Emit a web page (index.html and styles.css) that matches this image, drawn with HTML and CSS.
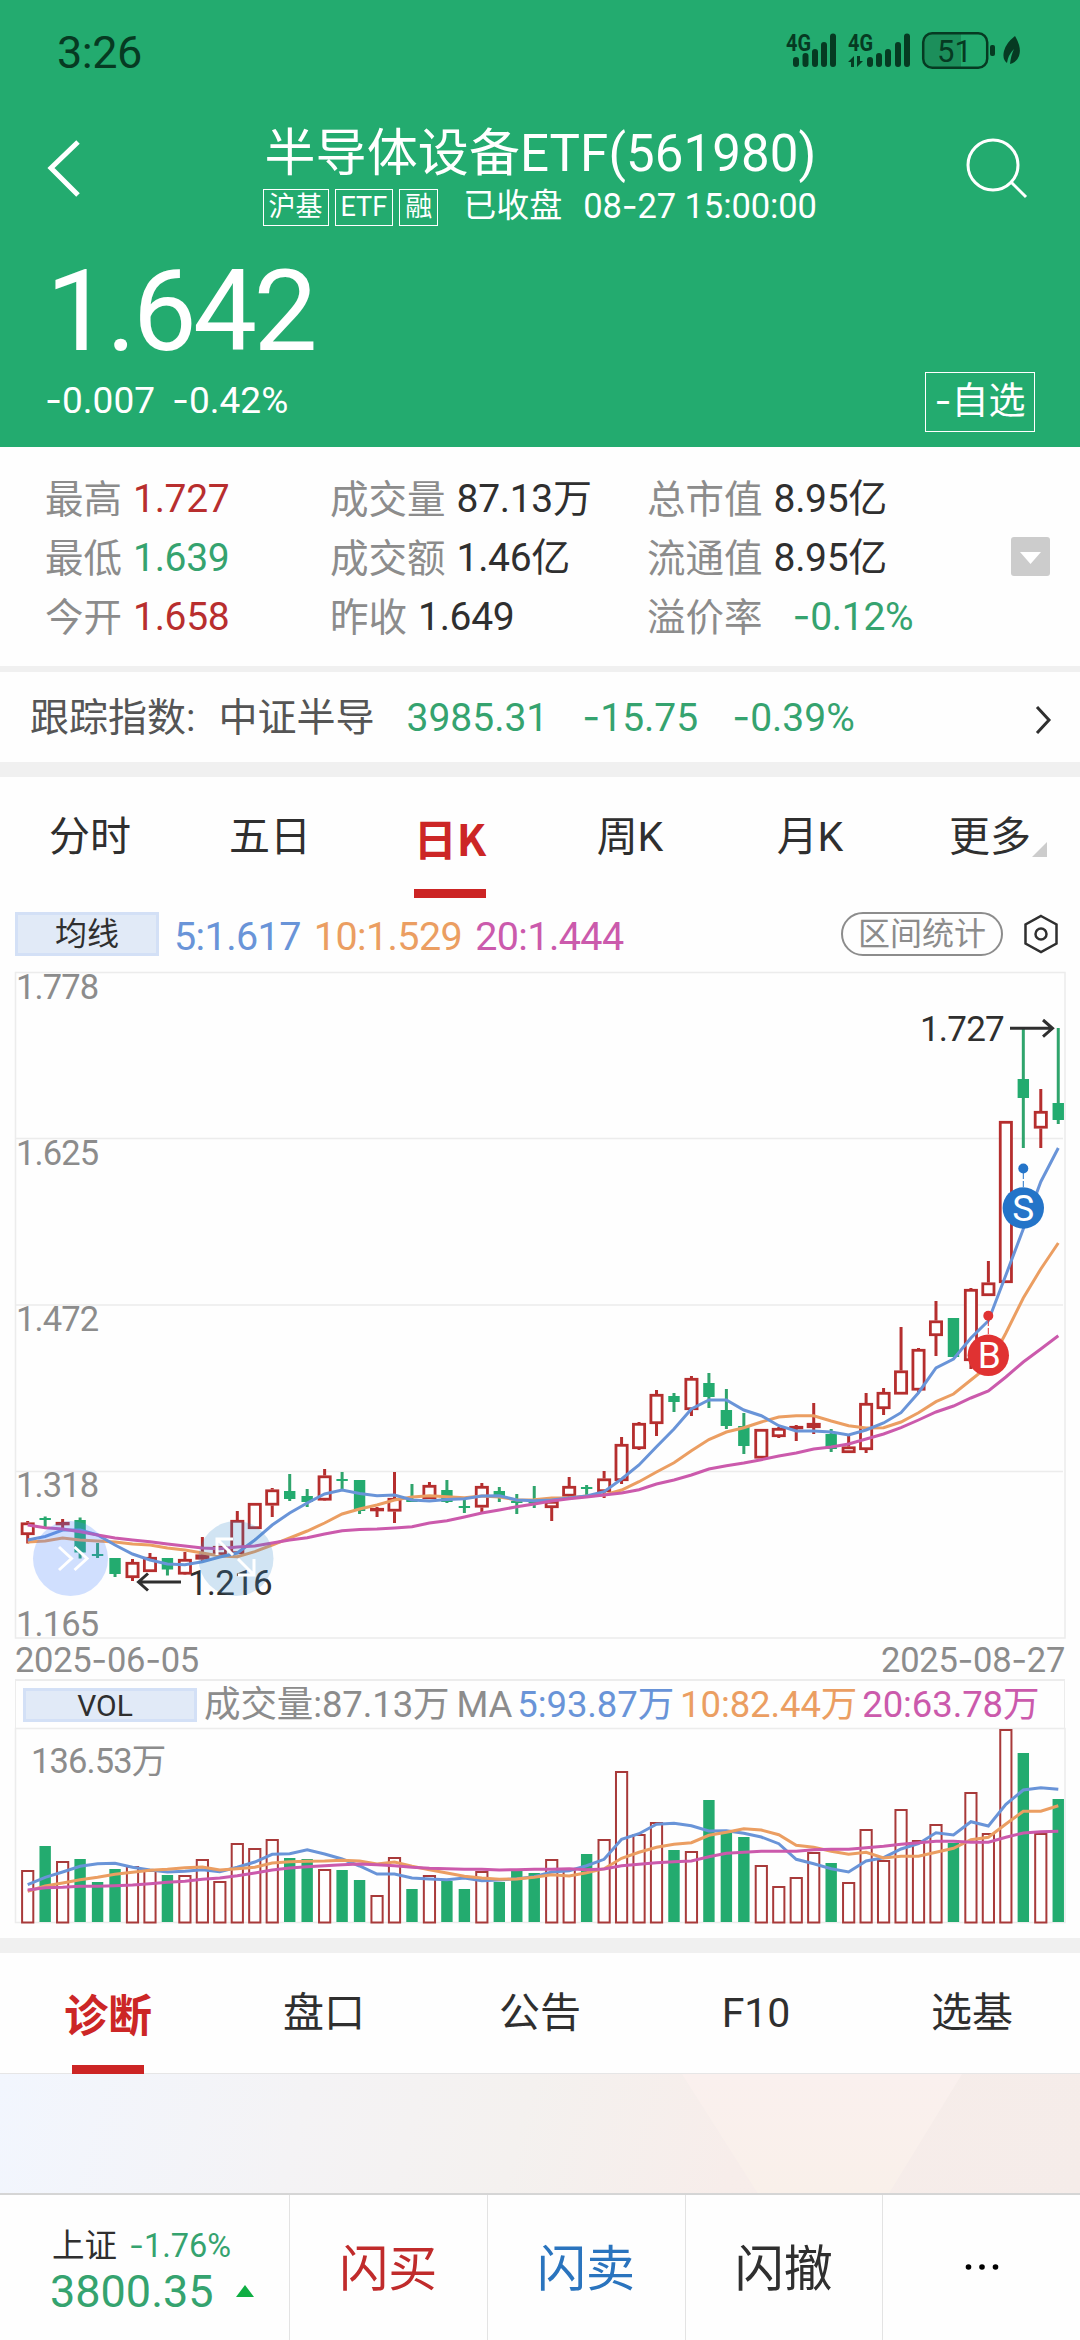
FILE: index.html
```html
<!DOCTYPE html>
<html lang="zh-CN">
<head>
    <meta charset="UTF-8">
    <meta name="viewport" content="width=device-width, initial-scale=1.0">
    <title>半导体设备ETF(561980)</title>
    <link rel="stylesheet" href="styles.css">
</head>
<body>
    <header class="header">
        <div class="status-bar">
            <span class="clock">3:26</span>
            <svg class="status-icons" width="240" height="44" viewBox="784 30 240 44">
                <g class="net">
                    <text x="786" y="51" textLength="25" lengthAdjust="spacingAndGlyphs">4G</text>
                    <text x="848" y="51" textLength="25" lengthAdjust="spacingAndGlyphs">4G</text>
                </g>
                <g class="bars">
                    <path d="M796 60v4M805.500 56v8M815 52v12M824 45v19M833 36.500v27.500"/>
                    <path d="M870 60v4M879 56v8M888 52v12M898 45v19M907 36.500v27.500"/>
                </g>
                <path class="ink" d="M848 62l6-6v11h-3v-5zM863 61l-6 6v-11h3v5z"/>
                <path class="battery-fill" d="M932 34h29v34h-29q-8 0-8-8v-18q0-8 8-8z"/>
                <rect class="battery" x="923.200" y="33.200" width="64" height="34.600" rx="9"/>
                <rect class="ink" x="990" y="45" width="5" height="11" rx="2"/>
                <text class="battery-text" x="937" y="62">51</text>
                <path class="ink" d="M1015 36q7 12 4 20q-3 7-9 8q1-9 4-15q-6 6-7 14q-5-4-3-12q2-8 11-15z"/>
            </svg>
        </div>
        <div class="nav">
            <svg class="back" width="40" height="64" viewBox="0 0 40 64"><path d="M32 6L5 32L32 59"/></svg>
            <div class="nav-title">
                <h1>半导体设备ETF(561980)</h1>
                <div class="nav-sub">
                    <span class="tag">沪基</span>
                    <span class="tag">ETF</span>
                    <span class="tag">融</span>
                    <span class="state">已收盘</span>
                    <span class="date">08<i>-</i>27 15:00:00</span>
                </div>
            </div>
            <svg class="search" width="64" height="64" viewBox="0 0 64 64"><circle cx="28" cy="29" r="25"/><path d="M46 46L61 61"/></svg>
        </div>
        <div class="price">1.642</div>
        <div class="price-row">
            <span class="diff"><i>-</i>0.007</span>
            <span class="diff"><i>-</i>0.42%</span>
            <button class="fav"><i>-</i>自选</button>
        </div>
    </header>

    <section class="stats">
        <dl class="stats-grid">
            <div><dt>最高</dt><dd class="up">1.727</dd></div>
            <div><dt>成交量</dt><dd>87.13万</dd></div>
            <div><dt>总市值</dt><dd>8.95亿</dd></div>
            <div><dt>最低</dt><dd class="down">1.639</dd></div>
            <div><dt>成交额</dt><dd>1.46亿</dd></div>
            <div><dt>流通值</dt><dd>8.95亿</dd></div>
            <div><dt>今开</dt><dd class="up">1.658</dd></div>
            <div><dt>昨收</dt><dd>1.649</dd></div>
            <div><dt>溢价率</dt><dd class="down premium"><i>-</i>0.12%</dd></div>
        </dl>
        <svg class="expand" width="39" height="39" viewBox="0 0 39 39"><rect width="39" height="39" rx="3"/><path d="M9 15h21l-10.500 12z"/></svg>
    </section>

    <section class="index-row">
        <span class="index-label">跟踪指数:</span>
        <span class="index-name">中证半导</span>
        <span class="index-value">3985.31</span>
        <span class="index-diff"><i>-</i>15.75</span>
        <span class="index-pct"><i>-</i>0.39%</span>
        <svg class="chevron" width="18" height="30" viewBox="0 0 18 30"><path d="M3 2L15 15L3 28"/></svg>
    </section>

    <nav class="tabs">
        <span>分时</span>
        <span>五日</span>
        <span class="active">日K</span>
        <span>周K</span>
        <span>月K</span>
        <span class="more">更多</span>
    </nav>

    <section class="ma-row">
        <span class="chip">均线</span>
        <span class="ma ma5">5:1.617</span>
        <span class="ma ma10">10:1.529</span>
        <span class="ma ma20">20:1.444</span>
        <span class="pill">区间统计</span>
        <svg class="gear" width="38" height="42" viewBox="0 0 38 42"><path d="M19 3L34.500 11.500V30.500L19 39L3.500 30.500V11.500Z"/><circle cx="19" cy="21" r="5.500"/></svg>
    </section>

    <svg class="chart" id="kline" width="1080" height="669" viewBox="0 971 1080 669">
        <path class="grid" d="M15.500 972.500H1065V1638H15.500ZM15 1138.500H1063M15 1305H1063M15 1471.500H1063"/>
        <g class="axis">
            <text x="16" y="999">1.778</text>
            <text x="16" y="1165">1.625</text>
            <text x="16" y="1331">1.472</text>
            <text x="16" y="1497">1.318</text>
            <text x="16" y="1636">1.165</text>
        </g>
    </svg>
    <div class="dates"><span>2025<i>-</i>06<i>-</i>05</span><span>2025<i>-</i>08<i>-</i>27</span></div>

    <section class="vol-row">
        <span class="chip vol-chip">VOL</span>
        <span class="vol-total">成交量:87.13万</span>
        <span class="vol-ma">MA</span>
        <span class="vol5 ma5">5:93.87万</span>
        <span class="vol10 ma10">10:82.44万</span>
        <span class="vol20 ma20">20:63.78万</span>
    </section>
    <svg class="chart" id="volume" width="1080" height="210" viewBox="0 1728 1080 210">
        <path class="grid" d="M15.500 1728.500H1065V1922.500H15.500Z"/>
        <text class="axis" x="31" y="1773">136.53万</text>
    </svg>

    <nav class="tabs tabs-bottom">
        <span class="active">诊断</span>
        <span>盘口</span>
        <span>公告</span>
        <span>F10</span>
        <span>选基</span>
    </nav>
    <div class="banner"></div>

    <footer class="footer">
        <div class="market">
            <div class="market-top"><span>上证</span><span class="down"><i>-</i>1.76%</span></div>
            <div class="market-index">3800.35<svg width="18" height="12" viewBox="0 0 18 12"><path d="M9 0L18 12H0Z"/></svg></div>
        </div>
        <div class="action buy">闪买</div>
        <div class="action sell">闪卖</div>
        <div class="action">闪撤</div>
        <div class="action"><svg width="40" height="10" viewBox="0 0 40 10"><circle cx="6.500" cy="5" r="2.800"/><circle cx="20" cy="5" r="2.800"/><circle cx="33.500" cy="5" r="2.800"/></svg></div>
    </footer>

    <script>
        const STEP = 17.467;
        const FIRST = 27.7;
        const kline = document.getElementById('kline');
        const volume = document.getElementById('volume');

        // [up, high, body top, body bottom, low, volume top]
        const candles = [
            [1, 1521, 1522.5, 1535, 1543.5, 1870], [0, 1516.5, 1518, 1520, 1529, 1846], [1, 1519, 1522, 1524, 1528, 1861],
            [0, 1517.5, 1520, 1552.5, 1558.5, 1859], [0, 1543, 1554, 1556, 1558, 1882], [0, 1558, 1558, 1574, 1577, 1869],
            [1, 1559, 1562, 1578, 1581, 1866], [1, 1553, 1557, 1572, 1572, 1870], [0, 1558, 1558, 1569.5, 1575.5, 1875],
            [1, 1552, 1559, 1574.5, 1575, 1875], [1, 1537, 1554.5, 1559.5, 1562.5, 1859], [1, 1546, 1546, 1555, 1555, 1881],
            [1, 1511, 1520, 1554, 1554, 1843], [1, 1503, 1503, 1529, 1529, 1848], [1, 1488, 1489.5, 1505.5, 1517, 1839],
            [0, 1474, 1491, 1499, 1501, 1858], [0, 1489, 1496, 1502, 1507, 1859], [1, 1469, 1475.5, 1500.5, 1501, 1869],
            [0, 1472, 1479, 1481, 1489, 1870], [0, 1480, 1480, 1511, 1514, 1880], [1, 1507, 1508, 1510, 1517, 1895],
            [1, 1472, 1498, 1511.5, 1523, 1857], [0, 1484, 1500, 1502, 1502, 1889], [1, 1482, 1485, 1499, 1499, 1875],
            [0, 1480, 1490, 1502, 1503, 1881], [0, 1499, 1506, 1508, 1513, 1889], [1, 1483, 1486, 1507.5, 1512, 1871],
            [0, 1487, 1491, 1497, 1502, 1882], [0, 1494, 1501, 1503, 1514, 1870], [0, 1486, 1501, 1503.5, 1508, 1873],
            [1, 1501, 1501, 1508, 1521, 1859], [1, 1477, 1486, 1496.5, 1497, 1869], [0, 1485, 1487, 1489, 1495, 1854],
            [1, 1471, 1478.5, 1492, 1498, 1839], [1, 1437, 1444, 1481, 1484, 1771], [1, 1422, 1423, 1449, 1450, 1834],
            [1, 1390, 1394, 1424, 1436, 1822], [0, 1393, 1396, 1402, 1412, 1850], [1, 1376, 1378, 1410, 1416, 1851],
            [0, 1373, 1383, 1397, 1408, 1800], [0, 1389, 1410, 1426, 1429, 1832], [0, 1413, 1426, 1446, 1454, 1837],
            [1, 1429, 1429, 1458.5, 1458, 1865], [1, 1427, 1428, 1437, 1438, 1886], [1, 1425, 1426, 1428, 1441, 1877],
            [1, 1403, 1423, 1428, 1434, 1852], [0, 1429, 1434, 1449, 1452, 1863], [1, 1435, 1446.5, 1453, 1453, 1882],
            [1, 1393, 1403, 1450, 1453, 1829], [1, 1388, 1392, 1409, 1415, 1860], [1, 1327, 1370.5, 1394.5, 1394, 1809],
            [1, 1348, 1349, 1390.5, 1392, 1840], [1, 1301, 1320.5, 1336, 1356, 1824], [0, 1318, 1318, 1357, 1357, 1843],
            [1, 1288, 1289, 1361, 1369, 1792], [1, 1261, 1282.5, 1296, 1296, 1833], [1, 1121, 1121, 1283, 1283, 1729],
            [0, 1029, 1079, 1098, 1148, 1753], [1, 1089, 1111, 1128.5, 1148, 1833], [0, 1028, 1103, 1120, 1124, 1799]
        ];

        const priceLines = {
            line10: [1542, 1541, 1538, 1540, 1541, 1542, 1544, 1545, 1548, 1550, 1553, 1556, 1556.7, 1551.7, 1545, 1538, 1531, 1523, 1514, 1509, 1505, 1500, 1497, 1495.7, 1496.7, 1497.7, 1496, 1497, 1500, 1499.7, 1498, 1497.7, 1496, 1495, 1490, 1481.7, 1472, 1462.7, 1450.7, 1439.5, 1432, 1427.7, 1422, 1417, 1415.7, 1415.7, 1421, 1425.7, 1428, 1427.7, 1422, 1412.7, 1401.7, 1394, 1380, 1366, 1333, 1298, 1269, 1243],
            line5: [1540, 1536.5, 1530, 1530, 1535, 1545, 1554, 1560, 1564, 1564.7, 1561.7, 1557, 1553, 1540, 1525, 1513, 1503, 1494, 1490, 1493.5, 1495.7, 1495, 1500, 1501, 1499.5, 1498.7, 1496, 1495.7, 1500, 1500.7, 1500, 1498, 1496, 1491.7, 1479, 1465, 1446.7, 1429, 1409, 1400, 1400, 1410, 1415.7, 1425.7, 1431, 1431, 1432, 1435, 1430, 1423, 1412.7, 1392.7, 1368, 1359, 1338, 1320.7, 1275, 1229, 1181.7, 1148],
            line20: [1525, 1527.7, 1529, 1531.7, 1535, 1538, 1540, 1541.7, 1544, 1546, 1548, 1548.7, 1547, 1546, 1543, 1540, 1537.7, 1534, 1530.7, 1529.6, 1529, 1528, 1526.7, 1523, 1520.7, 1517, 1513, 1510, 1506.7, 1504, 1501, 1498.7, 1497, 1495, 1493, 1489.7, 1484, 1480, 1475, 1469, 1465.7, 1463, 1459.7, 1456, 1453, 1449, 1447, 1444, 1439, 1434, 1427.7, 1420, 1412, 1406, 1398, 1391, 1377, 1362, 1349, 1335.7]
        };

        const volumeLines = {
            line5: [1884.7, 1877.3, 1872, 1866.3, 1863.7, 1863.3, 1867.3, 1870, 1872, 1871.3, 1869.7, 1871.7, 1867.3, 1862, 1854.3, 1853.7, 1849.7, 1854, 1859, 1866, 1874, 1874, 1878, 1879, 1879.7, 1878, 1880.7, 1880, 1878.7, 1876.7, 1872, 1870.7, 1865.7, 1859.3, 1839.3, 1833.7, 1824.3, 1823.3, 1825.7, 1831, 1830.7, 1833.3, 1837, 1843.7, 1859.3, 1863.7, 1868.7, 1872, 1861, 1857.7, 1849, 1843.7, 1832.7, 1835, 1821.7, 1826, 1804.3, 1790, 1787.7, 1789.3],
            line10: [1891.3, 1886, 1883, 1879.7, 1877.3, 1874.3, 1872.3, 1870.3, 1869.3, 1867.7, 1867, 1870, 1868.7, 1867.3, 1863, 1861.7, 1861.3, 1861, 1860.3, 1861, 1864, 1862, 1866.3, 1869.7, 1873, 1876.3, 1878, 1879.3, 1879, 1877.3, 1874.7, 1876, 1872.7, 1868.7, 1858.3, 1852.3, 1847.3, 1844.3, 1842.7, 1835.3, 1832.3, 1828.7, 1830, 1834.7, 1845.3, 1847.3, 1851.3, 1854.3, 1852.3, 1858, 1856.3, 1856.3, 1852.3, 1848.3, 1839.7, 1837.3, 1824, 1811.3, 1811.3, 1805.7],
            line20: [1890, 1887.7, 1887.3, 1886.3, 1886.3, 1885.7, 1885, 1883.7, 1882.3, 1881.3, 1879.3, 1878, 1875.7, 1873, 1870, 1868, 1866.7, 1865.7, 1864.7, 1864, 1864.7, 1865.7, 1867.3, 1868.3, 1868.7, 1869.3, 1869.3, 1870, 1869.7, 1869.3, 1869.3, 1868.7, 1869.7, 1869, 1865.7, 1864.3, 1862.7, 1861.7, 1861, 1856.7, 1853.3, 1852.3, 1851.3, 1851.3, 1851.3, 1849.7, 1849.3, 1849.3, 1847.7, 1846.3, 1844.3, 1842.7, 1841.3, 1841.3, 1842.3, 1842.3, 1837.3, 1833, 1831.7, 1831.3]
        };

        function xAt(i) {
            return FIRST + i * STEP;
        }

        function add(parent, html) {
            parent.insertAdjacentHTML('beforeend', html);
        }

        function drawLines(parent, lines) {
            for (const name in lines) {
                const points = lines[name].map((y, i) => `${xAt(i).toFixed(1)},${y}`).join(' ');
                add(parent, `<polyline class="${name}" points="${points}"/>`);
            }
        }

        candles.forEach(([up, high, top, bottom, low, vol], i) => {
            const x = xAt(i);
            if (up) {
                // hollow body with the wick above and below it
                add(kline, `<path class="wick-up" d="M${x} ${high}V${top}M${x} ${bottom}V${Math.max(low, bottom)}"/>`);
                const h = Math.max(bottom - top - 2.6, 0.6);
                add(kline, `<rect class="body-up" x="${x - 5.6}" y="${top + 1.3}" width="11.2" height="${h}"/>`);
                add(volume, `<rect class="vol-up" x="${x - 5.6}" y="${vol + 1}" width="11.2" height="${1921.5 - vol}"/>`);
            } else {
                add(kline, `<path class="wick-down" d="M${x} ${high}V${low}"/>`);
                add(kline, `<rect class="fill-down" x="${x - 5.7}" y="${top}" width="11.4" height="${bottom - top}"/>`);
                add(volume, `<rect class="fill-down" x="${x - 5.7}" y="${vol}" width="11.4" height="${1922 - vol}"/>`);
            }
        });

        drawLines(kline, priceLines);
        drawLines(volume, volumeLines);

        // High / low marks
        add(kline, `<g class="mark">
            <text x="920" y="1041">1.727</text><path d="M1010 1028.300H1052M1043 1020L1052.500 1028.300L1043 1036.600"/>
            <text x="188" y="1595">1.216</text><path d="M181 1582H139M148 1573.500L138.500 1582L148 1590.500"/>
        </g>`);

        // Buy and sell points
        add(kline, `<g class="trade sell-point"><path d="M1023.300 1173V1188"/><circle cx="1023.300" cy="1168.500" r="5"/><circle cx="1023.300" cy="1208" r="20.700"/><text x="1023.300" y="1221">S</text></g>`);
        add(kline, `<g class="trade buy-point"><path d="M988.300 1320V1335"/><circle cx="988.300" cy="1315.700" r="5"/><circle cx="988.300" cy="1355.300" r="20.700"/><text x="989.300" y="1368.300">B</text></g>`);

        // Floating buttons over the chart
        add(kline, `<g class="float">
            <circle class="float-a" cx="70.500" cy="1558.500" r="37.500"/><path d="M59 1547L71.500 1558.500L59 1570M74.500 1547L87 1558.500L74.500 1570"/>
            <circle class="float-b" cx="236" cy="1558.500" r="37.500"/><path d="M217 1555V1539H233M217 1539L233 1555M254 1559V1575H238M254 1575L238 1559"/>
        </g>`);
    </script>
</body>
</html>
```
FILE: styles.css
```css
* {
    box-sizing: border-box;
}
body {
    margin: 0;
    width: 1080px;
    height: 2340px;
    overflow: hidden;
    font-family: Roboto, "Noto Sans CJK SC", sans-serif;
    font-size: 39px;
    color: #2f2f2f;
    background: #fefefe;
}
/* wide minus sign */
i {
    font-family: Inter, sans-serif;
    font-style: normal;
    line-height: 1;
}
.up { color: #b82e2e; }
.down { color: #35a36f; }
.ma5 { color: #6994d8; }
.ma10 { color: #eb9e62; }
.ma20 { color: #cb5aac; }

/* header */
.header {
    height: 447px;
    background: #23ab6f;
    color: #fff;
}
.status-bar {
    height: 104px;
    padding: 30px 56px 0 57px;
    display: flex;
    justify-content: space-between;
    color: #063a22;
}
.clock {
    font-size: 45px;
    line-height: 46px;
    letter-spacing: -0.5px;
}
.status-icons .net {
    font-size: 23px;
    font-weight: 700;
    fill: #063a22;
}
.bars path {
    stroke: #063a22;
    stroke-width: 6;
    stroke-linecap: round;
}
.ink { fill: #063a22; }
.battery {
    fill: none;
    stroke: #063a22;
    stroke-width: 2.5;
}
.battery-fill { fill: #1c8f5b; }
.battery-text {
    font-size: 31px;
    fill: #063a22;
}
.nav {
    height: 136px;
    padding: 16px 51px 0 46px;
    display: flex;
    justify-content: space-between;
}
.back, .search {
    margin-top: 16px;
    fill: none;
    stroke: #fff;
    stroke-width: 5;
}
.search {
    stroke-width: 3;
}
.nav-title {
    width: 564px;
    margin-left: 38px;
}
.nav h1 {
    margin: 0 0 0 2px;
    font-size: 51px;
    font-weight: 400;
    line-height: 67px;
    letter-spacing: 0.1px;
    white-space: nowrap;
}
.nav-sub {
    display: flex;
    align-items: center;
    gap: 6px;
    height: 37px;
    margin-top: 2px;
    font-size: 33px;
    line-height: 33px;
    white-space: nowrap;
}
.tag {
    height: 37px;
    padding: 0 5px;
    border: 1.5px solid #fff;
    font-size: 27px;
    line-height: 34px;
}
.state {
    margin: -4px 0 0 19px;
}
.date {
    margin: -3px 0 0 15px;
    font-size: 34.5px;
    letter-spacing: -0.1px;
}
.price {
    height: 126px;
    padding-left: 46px;
    font-size: 114px;
    line-height: 142px;
    letter-spacing: -3.7px;
}
.price-row {
    display: flex;
    align-items: center;
    gap: 17px;
    height: 60px;
    margin-top: 6px;
    padding: 0 45px;
}
.diff {
    margin-top: -3px;
    font-size: 37px;
}
.fav {
    width: 110px;
    height: 60px;
    margin-left: auto;
    padding: 0;
    border: 1.5px solid #fff;
    background: none;
    color: #fff;
    font: 37px/56px Roboto, "Noto Sans CJK SC", sans-serif;
    white-space: nowrap;
}

/* quote numbers */
.stats {
    display: flex;
    justify-content: space-between;
    height: 225px;
    padding: 23px 30px 0 45px;
    border-bottom: 6px solid #f0f0f0;
}
.stats-grid {
    display: grid;
    grid-template-columns: 285px 317px 300px;
    grid-auto-rows: 59px;
    margin: 0;
    line-height: 59px;
}
.stats-grid div {
    display: flex;
    gap: 11px;
    white-space: nowrap;
}
.stats-grid dt {
    color: #8c8c8c;
    font-size: 38.5px;
}
.stats-grid dd {
    margin: 0;
    letter-spacing: -0.3px;
}
.stats-grid .premium {
    margin-left: 19px;
}
.expand {
    margin-top: 67px;
    fill: #ccc;
}
.expand path { fill: #fff; }

.index-row {
    display: flex;
    align-items: baseline;
    height: 105px;
    padding: 17px 28px 0 30px;
    border-bottom: 15px solid #f0f0f0;
    color: #35a36f;
    line-height: 58px;
    white-space: nowrap;
}
.index-label, .index-name {
    color: #555;
}
.index-name { margin-left: 23px; }
.index-value { margin-left: 32px; }
.index-diff, .index-pct { margin-left: 34px; }
.chevron {
    align-self: flex-start;
    margin: 16px 0 0 auto;
    fill: none;
    stroke: #2f2f2f;
    stroke-width: 3;
}

/* tabs */
.tabs {
    display: grid;
    grid-template-columns: repeat(6, 1fr);
    height: 120px;
    font-size: 41px;
    line-height: 121px;
    text-align: center;
}
.tabs .active {
    position: relative;
    color: #cc2626;
    font-family: "Noto Sans CJK SC", sans-serif;
    font-size: 43px;
    font-weight: 700;
}
.tabs .active::after {
    content: "";
    position: absolute;
    left: 50%;
    bottom: 0;
    width: 72px;
    height: 9px;
    margin-left: -36px;
    background: #cc2424;
}
.more {
    position: relative;
}
.more::after {
    content: "";
    position: absolute;
    right: 33px;
    bottom: 41px;
    border-left: 15px solid transparent;
    border-bottom: 15px solid #ccc;
}
.tabs-bottom {
    grid-template-columns: repeat(5, 1fr);
    border-top: 15px solid #f0f0f0;
    height: 135px;
}
.tabs-bottom .active {
    font-size: 44px;
}

/* moving averages */
.ma-row {
    display: flex;
    align-items: center;
    height: 74px;
    padding: 0 20px 0 15px;
}
.chip {
    width: 144px;
    height: 44px;
    border: 3px solid #d3e0f6;
    background: #e1eaf7;
    color: #2f2f2f;
    font-size: 32px;
    line-height: 39px;
    text-align: center;
}
.ma {
    margin: 4px 0 0 13px;
    font-size: 39.5px;
    letter-spacing: -0.6px;
}
.ma-row .ma5 { margin-left: 15px; }
.pill {
    width: 162px;
    height: 44px;
    margin-left: auto;
    border: 2px solid #8c8c8c;
    border-radius: 22px;
    color: #8c8c8c;
    font-size: 32px;
    line-height: 41px;
    text-align: center;
}
.gear {
    margin-left: 19px;
    fill: none;
    stroke: #2f2f2f;
    stroke-width: 2.5;
}

/* charts */
.chart {
    display: block;
    overflow: visible;
}
.grid {
    fill: none;
    stroke: #ececec;
    stroke-width: 1.5;
}
.axis {
    fill: #8c8c8c;
    font-size: 34.5px;
    letter-spacing: -0.9px;
}
.dates {
    display: flex;
    justify-content: space-between;
    height: 39px;
    padding: 0 15px;
    color: #8c8c8c;
    font-size: 34.5px;
    line-height: 41px;
    letter-spacing: -0.3px;
}
.wick-up, .wick-down {
    fill: none;
    stroke: #b52e2e;
    stroke-width: 3;
}
.wick-down { stroke: #2fa46c; }
.body-up, .vol-up {
    fill: #fff;
    stroke: #b52e2e;
    stroke-width: 2.8;
}
.vol-up {
    stroke: #a83a3a;
    stroke-width: 2;
}
.fill-down { fill: #23ab6f; }
.line5, .line10, .line20 {
    fill: none;
    stroke: #6994d8;
    stroke-width: 3;
}
.line10 { stroke: #eb9e62; }
.line20 { stroke: #cb5aac; }
.mark {
    font-size: 35px;
    letter-spacing: -0.8px;
    fill: #2f2f2f;
}
.mark path {
    fill: none;
    stroke: #2f2f2f;
    stroke-width: 3;
}
.trade {
    font-size: 37px;
    text-anchor: middle;
}
.trade text { fill: #fff; }
.trade path {
    stroke-width: 1;
    stroke-dasharray: 6 2;
}
.sell-point { fill: #2474c8; stroke: none; }
.sell-point path { stroke: #2474c8; }
.buy-point { fill: #e03232; }
.buy-point path { stroke: #e03232; }
.float path {
    fill: none;
    stroke: #fff;
    stroke-width: 3;
}
.float-a { fill: rgba(70, 130, 255, 0.25); }
.float-b { fill: rgba(50, 135, 205, 0.22); }

/* volume header */
.vol-row {
    display: flex;
    align-items: center;
    height: 49px;
    margin: 0 15px;
    padding: 0 0 0 7px;
    border: solid #ececec;
    border-width: 2px 1px 0;
    font-size: 36.5px;
    line-height: 46px;
    letter-spacing: -0.1px;
    white-space: nowrap;
}
.vol-chip {
    width: 174px;
    height: 34px;
    padding-right: 10px;
    font-size: 30px;
    line-height: 30px;
}
.vol-total, .vol-ma { color: #8c8c8c; }
.vol-total { margin-left: 7px; }
.vol-ma { margin-left: 7px; }
.vol5 { margin-left: 5px; }
.vol10 { margin-left: 6px; }
.vol20 { margin-left: 5px; }

.banner {
    height: 120px;
    border-top: 1px solid #e6e6e6;
    background: linear-gradient(105deg, #f2f6fe 0%, #f4f3f5 28%, #f4f1ef 48%, #f7edea 68%, #f5ece9 100%);
}
.banner::before {
    content: "";
    display: block;
    width: 280px;
    height: 119px;
    margin-left: 682px;
    background: linear-gradient(#faf0ee, #f9f0ea);
    clip-path: polygon(0 0, 100% 0, 74% 100%, 27% 100%);
}

/* bottom bar */
.footer {
    display: grid;
    grid-template-columns: 289px repeat(4, 1fr);
    height: 147px;
    border-top: 2px solid #d5d5d5;
}
.market {
    padding: 29px 0 0 50px;
}
.market-top {
    display: flex;
    gap: 12px;
    padding-left: 2px;
    font-size: 32.5px;
    line-height: 44px;
}
.market-index {
    color: #35a36f;
    font-size: 45px;
    line-height: 48px;
}
.market-index svg {
    margin-left: 22px;
    vertical-align: 10px;
    fill: #0fae43;
}
.action {
    display: flex;
    align-items: center;
    justify-content: center;
    padding-bottom: 6px;
    border-left: 1.5px solid #e3e3e3;
    font-size: 49px;
}
.action svg { margin-top: 4px; }
.buy { color: #c02b2b; }
.sell { color: #2a74be; }
```
